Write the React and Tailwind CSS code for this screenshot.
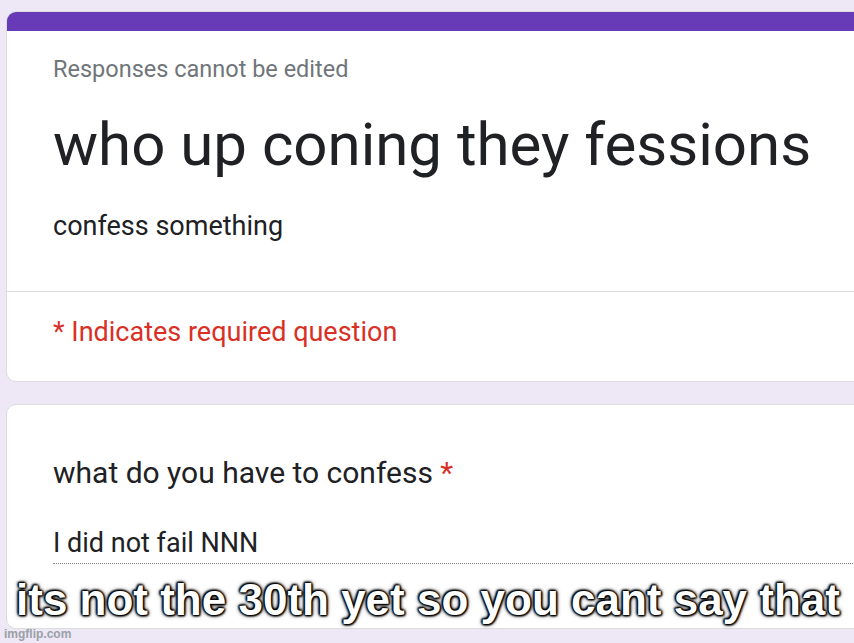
import React from 'react';

const roboto = { fontFamily: 'Roboto, "Noto Sans", sans-serif' };

const App = () => {
  return (
    <div className="relative w-[854px] h-[643px] overflow-hidden bg-[#ede7f6]" style={roboto}>
      <div className="flex flex-col gap-[22px] pl-[6px] pt-[11px]">
        <div className="w-[870px] rounded-[10px] bg-white border border-[#dadce0] overflow-hidden">
          <div className="h-[19px] bg-[#673ab7]" />
          <div className="px-[46px] pt-[24px] pb-[48px]">
            <p className="text-[23.5px] leading-[28px] text-[#70757a]">Responses cannot be edited</p>
            <h1 className="mt-[26px] text-[60px] leading-[72px] text-[#202124]">who up coning they fessions</h1>
            <p className="mt-[28px] text-[27px] leading-[34px] text-[#202124]">confess something</p>
          </div>
          <div className="border-t border-[#dadce0] px-[46px] pt-[22px] pb-[31px]">
            <p className="text-[27px] leading-[36px] text-[#d93025]">* Indicates required question</p>
          </div>
        </div>
        <div className="w-[870px] h-[225px] rounded-[10px] bg-white border border-[#dadce0]">
          <div className="pl-[46px] pt-[49px]">
            <p className="text-[30px] leading-[38px] text-[#202124]">
              what do you have to confess <span className="text-[#d93025]">*</span>
            </p>
            <p className="mt-[34px] text-[27px] leading-[34px] text-[#202124]">I did not fail NNN</p>
            <div className="mt-[3px] border-b border-dotted border-[#80868b]" />
          </div>
        </div>
      </div>
      <p className="absolute left-[4px] bottom-[0px] text-[12px] text-[#9aa0a6] font-bold" style={{ fontFamily: '"Liberation Sans", Arial, sans-serif' }}>imgflip.com</p>
      <p
        className="absolute left-0 right-0 top-[575px] pl-[2px] text-center text-white font-bold text-[44px] leading-[50px]"
        style={{
          fontFamily: '"Liberation Sans", Arial, sans-serif',
          textShadow: '0 0 2px #000, 0 0 2px #000, 0 0 3px #000, 0 0 3px #000, 0 0 5px #000, 1px 1px 2px #000, -1px -1px 2px #000',
        }}
      >
        its not the 30th yet so you cant say that
      </p>
    </div>
  );
};

export default App;
